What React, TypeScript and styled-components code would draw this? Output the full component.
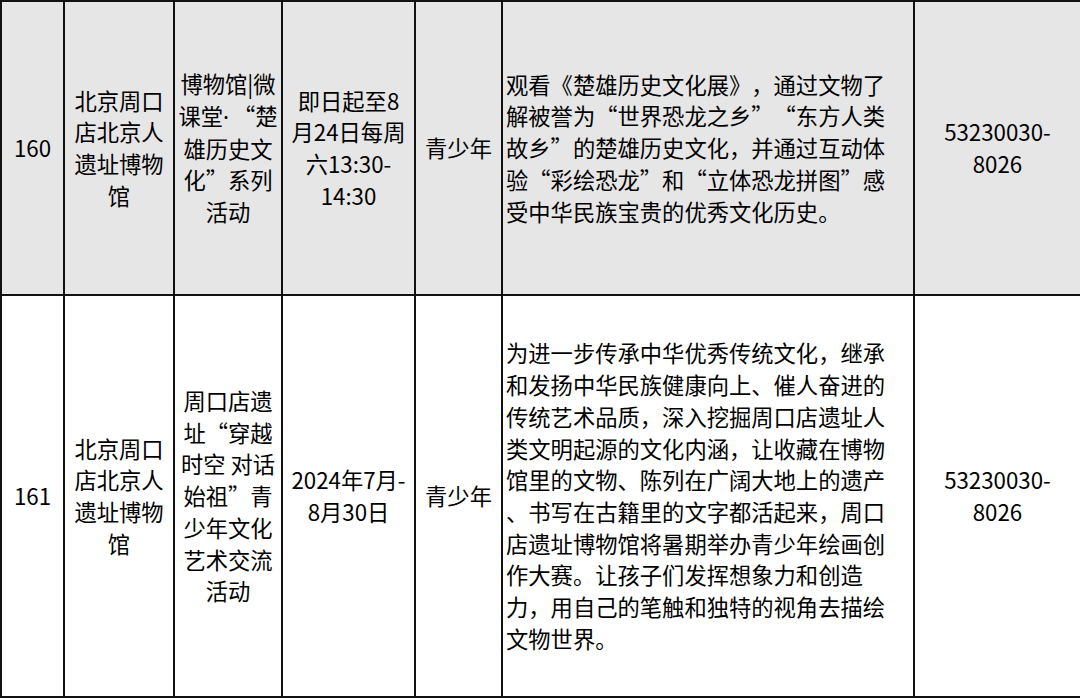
import React from 'react';
import styled, { createGlobalStyle } from 'styled-components';

const GlobalStyle = createGlobalStyle`
    html, body {
        margin: 0;
        padding: 0;
        background: #ffffff;
    }
    body {
        font-family: "Noto Sans CJK SC", "Noto Sans", sans-serif;
        color: #000000;
    }
`;

// 表格样式
const Sheet = styled.table`
    width: 1080px;
    border-collapse: collapse;
    table-layout: fixed;
    font-family: "Noto Sans CJK SC", "Noto Sans", sans-serif;
    font-size: 22.3px;
    line-height: 31.7px;
    color: #000000;
    text-spacing-trim: space-all;
`;

const Col = styled.col<{ w: number }>`
    width: ${({ w }) => w}px;
`;

const Row = styled.tr<{ shaded?: boolean; h: number }>`
    height: ${({ h }) => h}px;
    background: ${({ shaded }) => (shaded ? '#e6e6e6' : '#ffffff')};
`;

const Cell = styled.td<{ left?: boolean }>`
    border: 2px solid #111111;
    padding: ${({ left }) => (left ? '0 2px 0 3px' : '0 1px')};
    text-align: ${({ left }) => (left ? 'left' : 'center')};
    vertical-align: middle;
    overflow: hidden;
`;

const Line = styled.div`
    white-space: nowrap;
`;

// 半角间隔号
const NarrowDot = styled.span`
    font-family: "Noto Sans", "DejaVu Sans", sans-serif;
    padding-right: 4px;
`;

interface ActivityRow {
    no: string;
    venue: React.ReactNode[];
    title: React.ReactNode[];
    time: React.ReactNode[];
    audience: string;
    desc: React.ReactNode[];
    phone: React.ReactNode[];
    height: number;
    shaded?: boolean;
}

const colWidths = [63, 110, 108, 133, 87, 412, 167];

const rows: ActivityRow[] = [
    {
        no: '160',
        venue: ['北京周口', '店北京人', '遗址博物', '馆'],
        title: [
            '博物馆|微',
            <>课堂<NarrowDot>·</NarrowDot>“楚</>,
            '雄历史文',
            '化”系列',
            '活动',
        ],
        time: ['即日起至8', '月24日每周', '六13:30-', '14:30'],
        audience: '青少年',
        desc: [
            '观看《楚雄历史文化展》，通过文物了',
            '解被誉为“世界恐龙之乡”“东方人类',
            '故乡”的楚雄历史文化，并通过互动体',
            '验“彩绘恐龙”和“立体恐龙拼图”感',
            '受中华民族宝贵的优秀文化历史。',
        ],
        phone: ['53230030-', '8026'],
        height: 294,
        shaded: true,
    },
    {
        no: '161',
        venue: ['北京周口', '店北京人', '遗址博物', '馆'],
        title: ['周口店遗', '址“穿越', '时空 对话', '始祖”青', '少年文化', '艺术交流', '活动'],
        time: ['2024年7月-', '8月30日'],
        audience: '青少年',
        desc: [
            '为进一步传承中华优秀传统文化，继承',
            '和发扬中华民族健康向上、催人奋进的',
            '传统艺术品质，深入挖掘周口店遗址人',
            '类文明起源的文化内涵，让收藏在博物',
            '馆里的文物、陈列在广阔大地上的遗产',
            '、书写在古籍里的文字都活起来，周口',
            '店遗址博物馆将暑期举办青少年绘画创',
            '作大赛。让孩子们发挥想象力和创造',
            '力，用自己的笔触和独特的视角去描绘',
            '文物世界。',
        ],
        phone: ['53230030-', '8026'],
        height: 402,
    },
];

const Lines: React.FC<{ items: React.ReactNode[] }> = ({ items }) => (
    <>
        {items.map((t, i) => (
            <Line key={i}>{t}</Line>
        ))}
    </>
);

const App: React.FC = () => {
    return (
        <>
            <GlobalStyle />
            <Sheet lang="zh-CN">
                <colgroup>
                    {colWidths.map((w, i) => (
                        <Col key={i} w={w} />
                    ))}
                </colgroup>
                <tbody>
                    {rows.map((r) => (
                        <Row key={r.no} shaded={r.shaded} h={r.height}>
                            <Cell>{r.no}</Cell>
                            <Cell><Lines items={r.venue} /></Cell>
                            <Cell><Lines items={r.title} /></Cell>
                            <Cell><Lines items={r.time} /></Cell>
                            <Cell>{r.audience}</Cell>
                            <Cell left><Lines items={r.desc} /></Cell>
                            <Cell><Lines items={r.phone} /></Cell>
                        </Row>
                    ))}
                </tbody>
            </Sheet>
        </>
    );
};

export default App;
